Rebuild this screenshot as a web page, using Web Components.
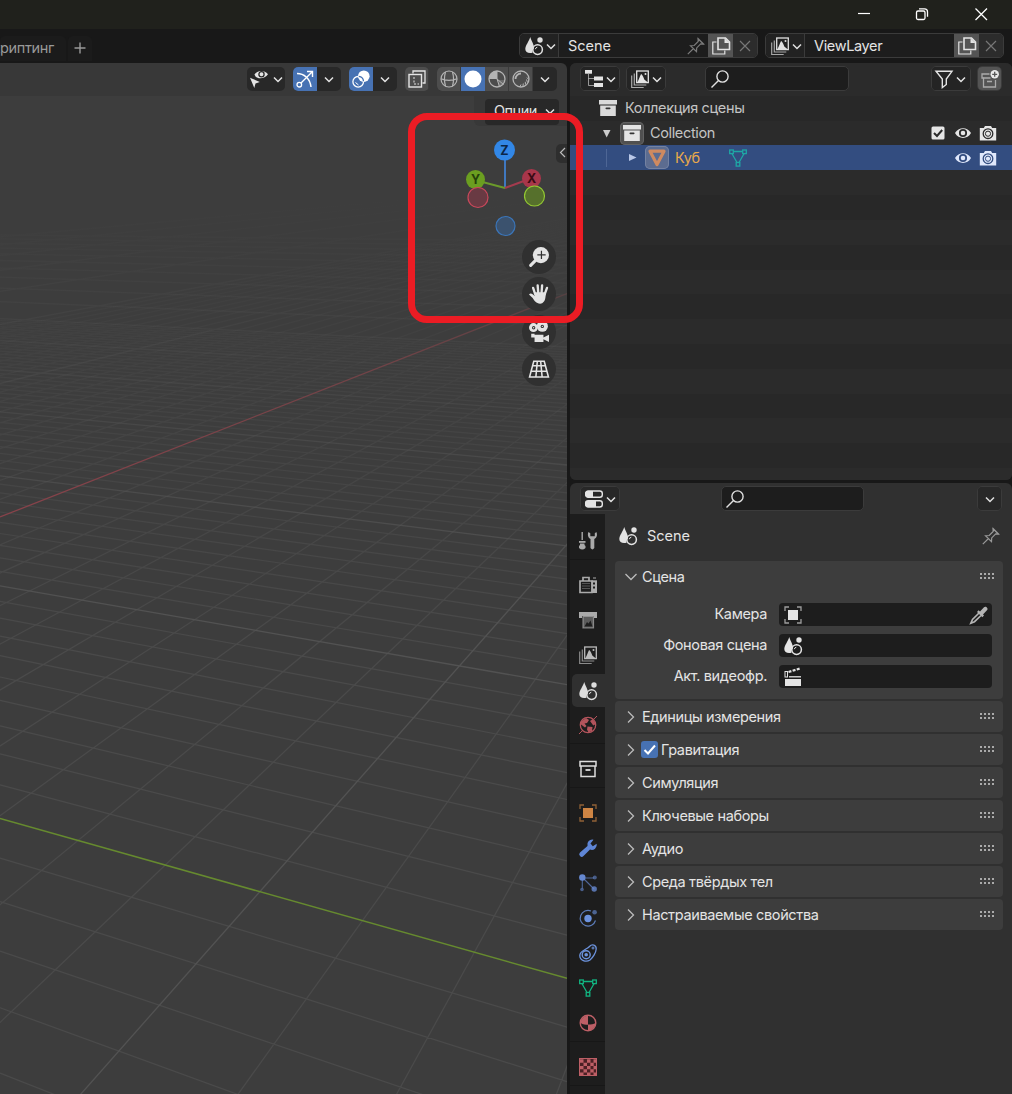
<!DOCTYPE html>
<html lang="ru">
<head>
<meta charset="UTF-8">
<title>Blender</title>
<style>
    body {
        margin: 0;
        width: 1012px;
        height: 1094px;
        overflow: hidden;
        background: #181818;
        color: #e0e0e0;
        font-family: Inter, "Noto Sans", sans-serif;
        font-size: 14.5px;
        line-height: 18px;
        letter-spacing: -.36px;
    }
</style>
</head>
<body>
<blender-app></blender-app>

<script>
// Icon set, every icon is drawn on an 18x18 grid
const ICONS = {
    scene: `<path d="M5.2 0C6.4 4 9.2 7.500 9 11.300 7.800 12.400 7.300 13.800 7.500 15.700 3.500 17 .3 15 .3 12 .3 8.500 4 4.500 5.200 0z" fill="currentColor"/><circle cx="15" cy="3" r="2.700" fill="currentColor"/><circle cx="12.600" cy="12.600" r="4.800" fill="none" stroke="currentColor" stroke-width="1.500"/><path d="M10.300 12.200a2.500 2.500 0 0 1 2-2" fill="none" stroke="currentColor"/>`,
    layers: `<path d="M.7 5.500v12h12M3.300 3.500v11.500h12" fill="none" stroke="currentColor" opacity=".7" stroke-width="1.200"/><rect x="5.700" y="1" width="11.600" height="11.600" fill="none" stroke="currentColor" stroke-width="1.300"/><path d="M6.500 12c1.500-2 2.500-7 3.800-8 1.500 1 2.500 4.500 3 5.500l3 2.500z" fill="currentColor"/><circle cx="14.500" cy="4" r="1" fill="currentColor"/>`,
    pin: `<path d="M.8 17.200l5.700-5.700M10.500 1l6.500 6.500M11 1.800l.2 2.700-4 4-3.700.2 6 6 .2-3.800 4-4 2.700.2z" fill="none" stroke="currentColor" stroke-width="1.200"/>`,
    copy: `<path d="M4.500 5H.8v12h12v-3.500" fill="none" stroke="currentColor" stroke-width="1.200"/><path d="M6 1h7.500l4 4v7.500H6z" fill="none" stroke="currentColor" stroke-width="1.600"/><path d="M12.500 1v5h5z" fill="currentColor"/>`,
    close: `<path d="M4 4l10 10M14 4L4 14" stroke="currentColor" stroke-width="1.200"/>`,
    down: `<path d="M5 7.500l4 4 4-4" fill="none" stroke="currentColor" stroke-width="1.500"/>`,
    tree: `<rect x="0" y="0" width="7" height="3.700" fill="currentColor"/><path d="M3.500 4v11.500H9M3.500 8.500H9" fill="none" stroke="currentColor" opacity=".6"/><rect x="9" y="6.500" width="9" height="4" fill="currentColor"/><rect x="9" y="13" width="9" height="4" fill="currentColor"/>`,
    search: `<circle cx="11.500" cy="6.500" r="5.600" fill="none" stroke="currentColor" stroke-width="1.400"/><path d="M7.500 10.500L.5 17.500" stroke="currentColor" stroke-width="1.500"/>`,
    filter: `<path d="M1 1.300h16L11.300 9v5.500l-4 3V9z" fill="none" stroke="currentColor" stroke-width="1.400"/>`,
    newcol: `<path d="M8.500 4H1v4h1.500v9h12V10" fill="none" stroke="currentColor" stroke-width="1.300"/><path d="M2.500 8h7M6 11.500h5" stroke="currentColor" stroke-width="1.500"/><circle cx="13.700" cy="4.300" r="4.200" fill="#e8e8e8"/><path d="M13.700 1.800v5M11.200 4.300h5" stroke="#545454" stroke-width="1.300"/>`,
    select: `<path d="M4.500 4.500C7 .5 14-.5 18 4.300 15 9 8 9.300 5.500 6.500z" fill="currentColor"/><circle cx="11.500" cy="4.300" r="2.600" fill="currentColor" stroke="#282828" stroke-width="1.300"/><path d="M0 7.800l9.800 4.200-4.300 1.500L4.300 18z" fill="currentColor"/>`,
    gizmo: `<path d="M1 3.500c7 0 13 5 14 13.500" fill="none" stroke="currentColor" stroke-width="1.500"/><circle cx="3.300" cy="14.700" r="2.300" fill="none" stroke="currentColor" stroke-width="1.300"/><path d="M5 13L16 2M11 1.500h5.500V7" fill="none" stroke="currentColor" stroke-width="1.400"/>`,
    overlay: `<circle cx="11.800" cy="6.200" r="5.800" fill="currentColor"/><circle cx="6.200" cy="11.800" r="5.300" fill="none" stroke="currentColor" stroke-width="1.300"/><path d="M6.800 6.400a5.300 5.300 0 0 1 4.700 4.900" fill="none" stroke="#4772b3" stroke-width="1.300"/><path d="M3.500 12.500l3 2.500" stroke="currentColor"/>`,
    xray: `<path d="M5 3.500V1h12v12h-2.500" fill="none" stroke="currentColor" stroke-width="1.300"/><rect x="1" y="4.500" width="12.500" height="12.500" fill="none" stroke="currentColor" stroke-width="1.400"/><path d="M6 7v7h5" fill="none" stroke="currentColor" stroke-dasharray="2 1.500"/>`,
    wire: `<g fill="none" stroke="currentColor" stroke-width="1.200"><circle cx="9" cy="9" r="8"/><path d="M5.500 2c-1.200 4-1.200 10 0 14M12.500 2c1.200 4 1.200 10 0 14M1 8.800c4 2 12 2 16 0"/></g>`,
    solid: `<circle cx="9" cy="9" r="8.500" fill="currentColor"/>`,
    material: `<circle cx="9" cy="9" r="8" fill="none" stroke="currentColor" stroke-width="1.300"/><path d="M9 9V1A8 8 0 0 0 1 9z" fill="currentColor"/><path d="M10 10h7a8 8 0 0 1-7 7z" fill="currentColor" opacity=".3"/><path d="M9 9l6.500 5.500M9 1v8l2.500 7.500" fill="none" stroke="currentColor"/>`,
    rendered: `<circle cx="9" cy="9" r="8" fill="none" stroke="currentColor" stroke-width="1.300"/><path d="M3.500 9A5.500 5.500 0 0 1 9 3.500" fill="none" stroke="currentColor" stroke-width="1.800"/><path d="M8 16.500l1-2M11 16l.3-2.500M13.500 14.500l-.2-2.700M15.500 12.500l-1-3M16.500 9.500l-1.500-2" stroke="currentColor"/>`,
    box: `<rect x="0" y="1" width="18" height="4.500" fill="currentColor"/><path d="M1.200 6.500h15.600V17H1.200z" fill="currentColor"/><rect x="6.500" y="8.500" width="5" height="1.800" rx=".8" fill="#333"/>`,
    boxline: `<path d="M1 1.500h16V6H1zM2 6v10.500h14V6" fill="none" stroke="currentColor" stroke-width="1.500"/><path d="M6.500 10h5" stroke="currentColor" stroke-width="1.800"/>`,
    mesh: `<g fill="none" stroke="currentColor" stroke-width="1.300"><rect x=".7" y="1" width="3.600" height="3.600"/><rect x="13.700" y="1" width="3.600" height="3.600"/><rect x="7.200" y="13.500" width="3.600" height="3.600"/><path d="M4.300 2.500h9.400M3 4.800l5 8.700M15 4.800l-5 8.700"/></g>`,
    cone: `<path d="M2 2.200h14L9 15.500z" fill="none" stroke="currentColor" stroke-width="3.200" stroke-linejoin="round"/>`,
    check: `<rect x="2.500" y="2.500" width="13" height="13" rx="1.500" fill="currentColor"/><path d="M5 9l3 3L13.200 6" fill="none" stroke="#2b2b2b" stroke-width="2"/>`,
    eye: `<path d="M1 9c3.500-6.500 12.500-6.500 16 0-3.500 6.500-12.500 6.500-16 0z" fill="currentColor"/><circle cx="9" cy="9" r="3.200" fill="none" stroke="var(--hole, #2b2b2b)" stroke-width="1.800"/>`,
    camera: `<path d="M.8 4h4l1.200-2h6l1.200 2h4v12.500H.8z" fill="currentColor"/><circle cx="9" cy="9.700" r="4.800" fill="none" stroke="var(--hole, #2b2b2b)" stroke-width="1.300"/><circle cx="9" cy="9.700" r="2.600" fill="none" stroke="var(--hole, #2b2b2b)" stroke-width="1"/>`,
    props: `<rect x=".7" y="1" width="16.600" height="6.200" rx="2.500" fill="none" stroke="currentColor" stroke-width="1.400"/><path d="M3 1h5v6.200H3A3 3 0 0 1 3 1z" fill="currentColor"/><rect x=".7" y="10.800" width="16.600" height="6.200" rx="2.500" fill="none" stroke="currentColor" stroke-width="1.400"/><path d="M3 10.800h8V17H3a3 3 0 0 1 0-6.200z" fill="currentColor"/>`,
    tools: `<path d="M3.200 0v8" stroke="currentColor" stroke-width="1.400"/><rect x="0" y="9" width="6.500" height="1.800" fill="currentColor"/><path d="M1 11.500h4.500v1.500l1 1v2q-3.200 3-6.500 0v-2l1-1z" fill="currentColor"/><path d="M9.500 0c-1.500 3 0 6 2 7V16q1.900 2.800 3.800 0V7c2.200-1 3.600-4 2-7l-1.500 1.200v3h-4.500V1.200z" fill="currentColor"/>`,
    render: `<path d="M4 5V1.500h6V5M1 5h12v11.500H1z" fill="none" stroke="currentColor" stroke-width="1.700"/><path d="M12.500 4.300H18V17h-5.500z" fill="currentColor"/><path d="M3 7.500h8M3 10h8M3 12.500h8" stroke="currentColor" opacity=".4"/><path d="M15 6.500v2M15 10.500v2" stroke="#1d1d1d" stroke-width="2"/><path d="M14 2h3" stroke="currentColor"/>`,
    output: `<path d="M0 1h18v6h-3V5H3v2H0z" fill="currentColor"/><path d="M4 5h10.500V17H4z" fill="currentColor" opacity=".45"/><path d="M4 5.500h10.500V17H4z" fill="none" stroke="currentColor" stroke-width="1.200" opacity=".7"/><path d="M5.500 15.500l2.500-4.500 1.500 1.500L11.500 9.500l2 6z" fill="#1d1d1d"/>`,
    world: `<circle cx="9" cy="9" r="7.700" fill="none" stroke="currentColor" stroke-width="1.300"/><path d="M2 5.500l5-3.500 3 2-2 3-2.500.5 2 2.500-1.500 1.500L2 8.500zM11 5l3-2 2.800 5-2.500 1.500zM8.500 10.500l5 .5-.5 4-3.500 1.500-1.500-3z" fill="currentColor"/><path d="M0 18l3.300-3.300M14.800 3.300L18 0" stroke="currentColor"/>`,
    object: `<path d="M5 1H1v4M13 1h4v4M5 17H1v-4M13 17h4v-4" fill="none" stroke="currentColor" stroke-width="1.300" opacity=".65"/><rect x="4" y="4" width="10" height="10" fill="currentColor"/>`,
    wrench: `<path d="M17.700 4.800A5 5 0 0 1 11 10.500L4.500 17A2.300 2.300 0 0 1 1 13.500L8.500 7A5 5 0 0 1 14.500.7L11.500 4.500l2.300 2.700z" fill="currentColor"/>`,
    particles: `<path d="M3 4h12M3.300 4v10.500M4 4l11 11" stroke="currentColor" stroke-width="1.100" opacity=".7"/><circle cx="3.300" cy="3.500" r="3.200" fill="currentColor"/><circle cx="15.800" cy="3.500" r="2" fill="currentColor" opacity=".6"/><circle cx="3" cy="15.500" r="1.800" fill="currentColor" opacity=".6"/><circle cx="15.200" cy="15" r="2.700" fill="currentColor" opacity=".8"/>`,
    physics: `<path d="M12 2A7.800 7.800 0 1 0 16.500 11.500" fill="none" stroke="currentColor" stroke-width="1.200" opacity=".8"/><circle cx="9" cy="9.500" r="3.700" fill="currentColor"/><circle cx="15.600" cy="3.200" r="2.300" fill="currentColor" opacity=".6"/>`,
    constraint: `<path d="M10.500 2.500C13-.5 17.500 1 17.200 5c-.2 3.500-3.200 8.500-6.200 11C7 18.500.8 16.500.8 11.500.8 6.500 8 5.500 10.500 2.500z" fill="none" stroke="currentColor" stroke-width="1.300"/><circle cx="7.200" cy="10.700" r="4" fill="none" stroke="currentColor" stroke-width="1.400"/><circle cx="7.200" cy="10.700" r="1.800" fill="currentColor"/><path d="M12.500 4h3M14 2.500v3" stroke="currentColor"/>`,
    sphere: `<circle cx="9" cy="9" r="7.800" fill="none" stroke="currentColor" stroke-width="1.400"/><path d="M9 9V1.500A8 8 0 0 0 1.500 9C4 10.500 6.500 10.700 9 10.700zM9 10.500c3 0 5.500-.5 7.700-1.500A8 8 0 0 1 9 16.700z" fill="currentColor"/>`,
    checker: `<rect x=".5" y=".5" width="17" height="17" fill="#4b2024" stroke="currentColor"/><path d="M1 3h3.500M8 3h3.500M14.500 3H18M4.500 6.300H8M11.300 6.300h3.400M1 9.600h3.500M8 9.600h3.500M14.500 9.600H18M4.500 12.900H8M11.300 12.900h3.400M1 16.100h3.500M8 16.100h3.500M14.500 16.100H18" stroke="currentColor" stroke-width="3.300"/>`,
    dropper: `<path d="M10 5.500l4-4.300c1.700-1.700 4.600.9 3.200 2.900L13 8.500l1 1-1.700 1.700L7 6l1.600-1.700z" fill="currentColor"/><path d="M9 7l-6.500 6.500L.8 17.200l3.700-1.500L11 9.500" fill="none" stroke="currentColor" stroke-width="1.600"/>`,
    clapper: `<rect x="1" y="11" width="16" height="7" fill="currentColor"/><rect x="1" y="3.500" width="2.500" height="5.500" fill="none" stroke="currentColor"/><path d="M4.500 4L16 .5" stroke="currentColor" stroke-width="2.200" stroke-dasharray="3 1.300"/><path d="M5 8.800h12" stroke="currentColor" stroke-width="1.300"/>`,
    zoomin: `<circle cx="10.700" cy="7.300" r="7.300" fill="currentColor"/><path d="M7 11L1.500 16.500" stroke="currentColor" stroke-width="2.800" stroke-linecap="round"/><path d="M11.200 3.300v7.500M7.500 7h7.500" stroke="#303030" stroke-width="1.100"/>`,
    hand: `<path d="M5.500 9L3.700 3.500M8.300 8L7.800 1.200M11.300 8l.5-6.800M14 9.500l2.200-6" stroke="currentColor" stroke-width="2.100" stroke-linecap="round"/><path d="M4.600 7.500h10.700l-.5 4.500c-.5 3.500-2 5.700-4.800 5.700-3.500 0-5.200-2.500-6.700-5L0 9.500C1.200 7.800 3.200 8.500 5 11z" fill="currentColor"/>`,
    movie: `<circle cx="4" cy="5" r="4" fill="currentColor"/><circle cx="12" cy="3.800" r="5" fill="currentColor"/><circle cx="4.200" cy="5.200" r="1.500" fill="#303030"/><circle cx="4.200" cy="5.200" r=".6" fill="currentColor"/><circle cx="12" cy="4" r="1.500" fill="#303030"/><circle cx="12" cy="4" r=".6" fill="currentColor"/><path d="M2 10.500h3v1h8v2.500l5-2.500v6.500L13 15.500V18H5v-4H2z" fill="currentColor"/>`,
    persp: `<path d="M4.300 2h9.400L17.500 16.200H.5zM3.300 6h11.500M2 11h14M7.500 2l-1.300 14M10.500 2l1.300 14" fill="none" stroke="currentColor" stroke-width="1.400"/>`,
    chevron: `<path d="M6 3.500l5.500 5.500L6 14.500" fill="none" stroke="currentColor" stroke-width="1.300"/>`
};

class BIcon extends HTMLElement {
    constructor() {
        super();
        this.attachShadow({ mode: 'open' });
    }

    connectedCallback() {
        this.shadowRoot.innerHTML = `
            <style>
                :host { display: inline-flex; flex: none; width: 18px; height: 18px; }
                svg { width: 100%; height: 100%; overflow: visible; }
            </style>
            <svg viewBox="0 0 18 18">${ICONS[this.getAttribute('name')]}</svg>
        `;
    }
}
customElements.define('b-icon', BIcon);

// Rounded widget which joins its segments, like the datablock selectors
class BGroup extends HTMLElement {
    constructor() {
        super();
        this.attachShadow({ mode: 'open' }).innerHTML = `
            <style>
                :host {
                    display: flex;
                    flex: none;
                    box-sizing: border-box;
                    height: 25px;
                    border: 1px solid #3b3b3b;
                    border-radius: 5px;
                    overflow: hidden;
                    background: #1d1d1d;
                }
                :host([flat]) { height: 24px; border: none; background: #282828; }
                ::slotted(*) {
                    display: flex;
                    align-items: center;
                    justify-content: center;
                    box-sizing: border-box;
                }
            </style>
            <slot></slot>
        `;
    }
}
customElements.define('b-group', BGroup);

class TopBar extends HTMLElement {
    constructor() {
        super();
        this.attachShadow({ mode: 'open' }).innerHTML = `
            <style>
                :host { display: block; }
                .title { display: flex; justify-content: flex-end; height: 29px; background: #20211c; }
                .title svg { width: 58px; height: 29px; }
                .bar { display: flex; height: 34px; padding: 4px 8px 0 0; box-sizing: border-box; gap: 7px; }
                .tab {
                    display: flex; align-items: center; justify-content: flex-end;
                    box-sizing: border-box; height: 25px; margin-top: 3px;
                    color: #999; background: #1b1b1b; border-radius: 5px 5px 0 0; overflow: hidden;
                }
                .first { width: 66px; padding: 0 12px 2px 0; }
                .plus { width: 24px; margin-left: -5px; margin-right: auto; justify-content: center; padding-bottom: 2px; }
                .menu { width: 39px; padding-left: 5px; justify-content: flex-start; background: #222; border-right: 1px solid #3b3b3b; }
                .name { width: 149px; justify-content: flex-start; padding: 0 3px 0 9px; color: #e4e4e4; }
                .name b-icon { margin-left: auto; color: #7b7b7b; }
                .copy { width: 25px; background: #545454; color: #e4e4e4; }
                .x { width: 24px; background: #2c2c2c; color: #777; }
                .menu b-icon + b-icon { margin-left: -1px; }
            </style>
            <div class="title">
                <svg viewBox="0 0 58 29"><path d="M20 13.500h12" stroke="#fff" stroke-width="1.200"/></svg>
                <svg viewBox="0 0 58 29"><g fill="none" stroke="#fff" stroke-width="1.300"><rect x="20.500" y="11" width="8.500" height="8.500" rx="1.500"/><path d="M23 8.800h5.500q3 0 3 3v5"/></g></svg>
                <svg viewBox="0 0 58 29"><path d="M21.500 8.500l11.500 11.500M33 8.500L21.500 20" stroke="#fff" stroke-width="1.300"/></svg>
            </div>
            <div class="bar">
                <div class="tab first">криптинг</div>
                <div class="tab plus"><svg width="12" height="12"><path d="M6 .5v11M.5 6h11" stroke="#999" stroke-width="1.400"/></svg></div>
                <b-group>
                    <div class="menu"><b-icon name="scene"></b-icon><b-icon name="down"></b-icon></div>
                    <div class="name" style="letter-spacing:0">Scene<b-icon name="pin"></b-icon></div>
                    <div class="copy"><b-icon name="copy"></b-icon></div>
                    <div class="x"><b-icon name="close"></b-icon></div>
                </b-group>
                <b-group>
                    <div class="menu"><b-icon name="layers"></b-icon><b-icon name="down"></b-icon></div>
                    <div class="name">ViewLayer</div>
                    <div class="copy"><b-icon name="copy"></b-icon></div>
                    <div class="x"><b-icon name="close"></b-icon></div>
                </b-group>
            </div>
        `;
    }
}
customElements.define('top-bar', TopBar);

// Perspective floor grid with the X and Y axes
class FloorGrid extends HTMLElement {
    constructor() {
        super();
        this.attachShadow({ mode: 'open' });
    }

    connectedCallback() {
        const w = 567;
        const top = 96;
        const vanish = { x: 912, y: 154 };
        let minor = '';
        let major = '';

        // lines parallel to Y
        for (let j = -7; j <= 160; j++) {
            if (j === 0 || (j > 60 && j % 10)) continue;
            const d = `M0 ${(170 + 11560 / (j + 17.8) - top).toFixed(1)}L${w} ${(158.6 + 14677 / (j + 17.9) - top).toFixed(1)}`;
            if (j % 10) minor += d; else major += d;
        }
        // lines parallel to X
        for (let i = -70; i <= 17; i++) {
            if (i === 0 || (i < -20 && i % 10)) continue;
            const x = -2106 + 56900 / (34.05 - i);
            const y = 818.2 + 0.2822 * x;
            const k = 4;
            const d = `M${(x - (vanish.x - x) * k).toFixed(1)} ${(y - (vanish.y - y) * k - top).toFixed(1)}L${vanish.x} ${vanish.y - top}`;
            if (i % 10) minor += d; else major += d;
        }

        this.shadowRoot.innerHTML = `
            <style>
                :host { display: block; height: 998px; overflow: hidden; background: #3d3d3d; }
                svg { display: block; }
            </style>
            <svg width="${w}" height="998" fill="none">
                <defs>
                    <linearGradient id="minor" gradientUnits="userSpaceOnUse" x1="0" y1="110" x2="0" y2="560">
                        <stop offset="0" stop-color="#4a4a4a" stop-opacity="0"/>
                        <stop offset=".4" stop-color="#4a4a4a" stop-opacity=".45"/>
                        <stop offset="1" stop-color="#4a4a4a"/>
                    </linearGradient>
                    <linearGradient id="major" gradientUnits="userSpaceOnUse" x1="0" y1="100" x2="0" y2="520">
                        <stop offset="0" stop-color="#525252" stop-opacity="0"/>
                        <stop offset=".5" stop-color="#525252" stop-opacity=".45"/>
                        <stop offset="1" stop-color="#525252"/>
                    </linearGradient>
                    <linearGradient id="axis" x1="0" x2="1" y1="0" y2="0">
                        <stop offset="0" stop-color="#89424a"/>
                        <stop offset=".7" stop-color="#704347"/>
                        <stop offset="1" stop-color="#564042"/>
                    </linearGradient>
                </defs>
                <path d="${minor}" stroke="url(#minor)" stroke-width="1.200"/>
                <path d="${major}" stroke="url(#major)" stroke-width="1.300"/>
                <path d="M0 421L567 197.500" stroke="url(#axis)" stroke-width="1.300"/>
                <path d="M0 722.500L567 882.300" stroke="#668a2f" stroke-width="1.500"/>
            </svg>
        `;
    }
}
customElements.define('floor-grid', FloorGrid);

class ViewPort extends HTMLElement {
    constructor() {
        super();
        this.attachShadow({ mode: 'open' }).innerHTML = `
            <style>
                :host { display: block; position: relative; width: 567px; background: #383838; border-radius: 0 6px 0 0; overflow: hidden; }
                header { display: flex; box-sizing: border-box; height: 33px; padding: 4px 10px 0 0; justify-content: flex-end; gap: 8px; }
                b-group > div { width: 24px; color: #b4b4b4; }
                b-group > div:last-child { color: #e4e4e4; }
                b-group > .wide { width: 38px; padding-left: 3px; justify-content: flex-start; }
                .wide b-icon + b-icon { margin-left: 1px; }
                b-group > .on { background: #4772b3; color: #fff; }
                b-group > .off { background: #4d4d4d; color: #b4b4b4; border-right: 1px solid #3b3b3b; }
                .options {
                    position: absolute; left: 474px; top: 33px; width: 93px; height: 30px;
                    box-sizing: border-box; padding: 3px 8px 0 11px; background: #383838; border-radius: 0 0 0 6px;
                }
                .options div {
                    display: flex; align-items: center; justify-content: space-between;
                    height: 24px; padding: 0 0 2px 9px; background: #282828; border-radius: 4px; color: #e4e4e4; letter-spacing: -.5px;
                }
                .gizmo { position: absolute; left: 460px; top: 67px; }
                .gizmo text { font: 700 12.500px Inter, sans-serif; text-anchor: middle; letter-spacing: 0; }
                nav { position: absolute; left: 522px; top: 177px; display: grid; gap: 3.400px; }
                nav div {
                    display: flex; align-items: center; justify-content: center;
                    width: 34px; height: 34px; border-radius: 50%; background: #303030; color: #e4e4e4;
                }
                nav b-icon { width: 20px; height: 20px; }
                .side {
                    position: absolute; left: 556px; top: 81px; width: 11px; height: 19px;
                    background: #2e2e2e; border-radius: 5px 0 0 5px;
                }
            </style>
            <header>
                <b-group flat><div class="wide"><b-icon name="select"></b-icon><b-icon name="down"></b-icon></div></b-group>
                <b-group flat><div class="on"><b-icon name="gizmo"></b-icon></div><div><b-icon name="down"></b-icon></div></b-group>
                <b-group flat><div class="on"><b-icon name="overlay"></b-icon></div><div><b-icon name="down"></b-icon></div></b-group>
                <b-group flat><div class="off"><b-icon name="xray"></b-icon></div></b-group>
                <b-group flat>
                    <div class="off"><b-icon name="wire"></b-icon></div>
                    <div class="on"><b-icon name="solid"></b-icon></div>
                    <div class="off"><b-icon name="material"></b-icon></div>
                    <div class="off"><b-icon name="rendered"></b-icon></div>
                    <div><b-icon name="down"></b-icon></div>
                </b-group>
            </header>
            <floor-grid></floor-grid>
            <div class="options"><div>Опции<b-icon name="down"></b-icon></div></div>
            <svg class="gizmo" width="92" height="112">
                <g stroke-width="2">
                    <path d="M45 58V20" stroke="#4078bf"/>
                    <path d="M45 58L15 50" stroke="#6b9a2b"/>
                    <path d="M45 58l27-10" stroke="#a33b4e"/>
                </g>
                <circle cx="44.500" cy="20" r="10.500" fill="#3287e6"/>
                <circle cx="71.500" cy="48.500" r="9.500" fill="#a8364b"/>
                <circle cx="15.500" cy="49.500" r="9.500" fill="#6b9e20"/>
                <g stroke-width="1.200">
                    <circle cx="18" cy="67.500" r="10" fill="#693a43" stroke="#c9485b"/>
                    <circle cx="74.500" cy="66" r="10" fill="#56702c" stroke="#93c832"/>
                    <circle cx="45.500" cy="96" r="9.500" fill="#3b526e" stroke="#3b75b8"/>
                </g>
                <text x="44.500" y="24.700" fill="#0b2547">Z</text>
                <text x="71.500" y="53" fill="#3a0a14">X</text>
                <text x="15.500" y="54" fill="#24400a">Y</text>
            </svg>
            <nav>
                <div><b-icon name="zoomin"></b-icon></div>
                <div><b-icon name="hand"></b-icon></div>
                <div><b-icon name="movie"></b-icon></div>
                <div><b-icon name="persp"></b-icon></div>
            </nav>
            <div class="side"><svg width="11" height="19"><path d="M9 4L4.500 8.500 9 13" fill="none" stroke="#bbb" stroke-width="1.200"/></svg></div>
        `;
    }
}
customElements.define('view-port', ViewPort);

class OutLiner extends HTMLElement {
    constructor() {
        super();
        this.attachShadow({ mode: 'open' }).innerHTML = `
            <style>
                :host { display: block; height: 417px; background: #282828; border-radius: 6px; overflow: hidden; }
                header { display: flex; box-sizing: border-box; height: 33px; padding: 3px 10px 0; gap: 6px; background: #2b2b2b; }
                .menu { width: 38px; padding-left: 4px; justify-content: flex-start; background: #242424; color: #e4e4e4; }
                .menu b-icon + b-icon { margin-left: -1px; }
                .search { width: 142px; justify-content: flex-start; padding-left: 5px; }
                .find { margin: 0 auto 0 33px; }
                .new { width: 23px; background: #545454; color: #aaa; }
                .rows { height: 384px; background: repeating-linear-gradient(#282828 0 24.800px, #2b2b2b 24.800px 49.600px); }
                .row { display: flex; align-items: center; box-sizing: border-box; height: 24.700px; padding-right: 15px; color: #c4c4c4; }
                .row.sel { background: #334d80; color: #e9a94b; --hole: #334d80; }
                .badge {
                    display: flex; align-items: center; justify-content: center;
                    width: 24px; height: 23px; margin-right: 6px; border-radius: 5px;
                    background: #505050; box-shadow: inset 0 0 0 1px #626262;
                }
                .sel .badge { background: #5c6c90; box-shadow: inset 0 0 0 1px #7482a2; color: #cf8a60; }
                .tri { width: 9px; height: 9px; }
                .right { display: flex; gap: 7px; margin-left: auto; color: #e6e6e6; }
                .sel .right { color: #e0e8fb; }
                .line { width: 1px; height: 18px; background: #4e6695; margin: 0 21px 0 36px; }
            </style>
            <header>
                <b-group><div class="menu"><b-icon name="tree"></b-icon><b-icon name="down"></b-icon></div></b-group>
                <b-group><div class="menu"><b-icon name="layers"></b-icon><b-icon name="down"></b-icon></div></b-group>
                <b-group class="find"><div class="search"><b-icon name="search"></b-icon></div></b-group>
                <b-group><div class="menu" style="padding-left:3px"><b-icon name="filter"></b-icon><b-icon name="down"></b-icon></div></b-group>
                <b-group><div class="new"><b-icon name="newcol"></b-icon></div></b-group>
            </header>
            <div class="rows">
                <div class="row" style="padding-left:29px"><b-icon name="box" style="color:#dadada; margin-right:8px"></b-icon>Коллекция сцены</div>
                <div class="row" style="padding-left:32px">
                    <svg class="tri" style="margin-right:9px"><path d="M1 1h7.500L4.700 8.500z" fill="#ccc"/></svg>
                    <span class="badge"><b-icon name="box" style="color:#e4e4e4"></b-icon></span>Collection
                    <span class="right"><b-icon name="check"></b-icon><b-icon name="eye"></b-icon><b-icon name="camera"></b-icon></span>
                </div>
                <div class="row sel">
                    <span class="line"></span>
                    <svg class="tri" style="margin-right:8px"><path d="M1 1v7l7.500-3.500z" fill="#b9c8e8"/></svg>
                    <span class="badge"><b-icon name="cone"></b-icon></span>Куб
                    <b-icon name="mesh" style="color:#1fa7a5; margin-left:29px"></b-icon>
                    <span class="right"><b-icon name="eye"></b-icon><b-icon name="camera"></b-icon></span>
                </div>
            </div>
        `;
    }
}
customElements.define('out-liner', OutLiner);

// Collapsible panel: title attribute is "label", open panels show the slot
class PropPanel extends HTMLElement {
    constructor() {
        super();
        this.attachShadow({ mode: 'open' });
    }

    connectedCallback() {
        const open = this.hasAttribute('open');
        const check = this.hasAttribute('checked')
            ? '<svg class="check" width="17" height="17"><path d="M3.500 9l3.500 3.500 7-8" fill="none" stroke="#fff" stroke-width="2"/></svg>'
            : '';
        let dots = '';
        for (let y = 0; y < 2; y++) {
            for (let x = 0; x < 4; x++) {
                dots += `<rect x="${x * 4}" y="${y * 4}" width="2" height="2" fill="#aaa"/>`;
            }
        }
        this.shadowRoot.innerHTML = `
            <style>
                :host { display: block; border-radius: 4px; background: #3d3d3d; color: #e4e4e4; }
                .head { display: flex; align-items: center; height: 31px; padding: 0 8px 0 7px; }
                .arrow { margin-right: 2px; color: #bbb; }
                .open { transform: rotate(90deg); }
                .check { background: #4772b3; border-radius: 3px; margin: 0 3px 0 -1px; }
                .dots { margin-left: auto; }
            </style>
            <div class="head">
                <b-icon name="chevron" class="arrow ${open ? 'open' : ''}"></b-icon>${check}
                <span>${this.getAttribute('label')}</span>
                <svg class="dots" width="15" height="7">${dots}</svg>
            </div>
            <slot></slot>
        `;
    }
}
customElements.define('prop-panel', PropPanel);

class PropField extends HTMLElement {
    constructor() {
        super();
        this.attachShadow({ mode: 'open' });
    }

    connectedCallback() {
        this.shadowRoot.innerHTML = `
            <style>
                :host { display: flex; align-items: center; height: 23px; margin: 0 11px 8px 0; }
                label { width: 152px; margin-right: 12px; padding-bottom: 1px; text-align: right; }
                div {
                    display: flex; flex: 1; align-items: center; justify-content: space-between;
                    height: 23px; padding: 0 4px 0 5px; border-radius: 4px; background: #1d1d1d;
                }
            </style>
            <label>${this.getAttribute('label')}</label>
            <div><b-icon name="${this.getAttribute('icon')}"></b-icon><slot></slot></div>
        `;
    }
}
customElements.define('prop-field', PropField);

class PropEditor extends HTMLElement {
    constructor() {
        super();
        this.attachShadow({ mode: 'open' });
    }

    connectedCallback() {
        const groups = [
            [['tools', '#aaa']],
            [['render', '#aaa'], ['output', '#aaa'], ['layers', '#bbb'], ['scene', '#ddd'], ['world', '#b3545c']],
            [['boxline', '#ddd']],
            [['object', '#ce8544'], ['wrench', '#5f86d6'], ['particles', '#6688d0'], ['physics', '#6c93e0'],
             ['constraint', '#6c93dd'], ['mesh', '#12b481'], ['sphere', '#bd5f66']],
            [['checker', '#bd5f66']]
        ];
        const tabs = groups.map(group => `<div class="group">${group.map(([name, color]) =>
            `<div class="tab ${name}"><b-icon name="${name}" style="color:${color}"></b-icon></div>`).join('')}</div>`).join('');

        this.shadowRoot.innerHTML = `
            <style>
                :host { display: flex; flex-direction: column; flex: 1; background: #303030; border-radius: 6px 6px 0 0; overflow: hidden; }
                header { display: flex; justify-content: space-between; box-sizing: border-box; height: 31px; padding: 3px 10px 0; }
                .menu { width: 38px; padding-left: 4px; justify-content: flex-start; background: #282828; color: #e4e4e4; }
                .menu b-icon + b-icon { margin-left: -1px; }
                .search { width: 141px; padding-left: 4px; justify-content: flex-start; }
                .more { width: 23px; background: #282828; }
                .body { display: flex; flex: 1; }
                .tabs { display: flex; flex-direction: column; gap: 9px; box-sizing: border-box; width: 35px; padding-top: 10px; background: #1d1d1d; }
                .group { box-shadow: 0 1px #171717; }
                .tab { display: flex; align-items: center; justify-content: center; height: 34px; padding: 0 0 1px 1px; }
                .tab.scene { height: 33px; margin: 1px 0 1px 2px; padding: 0 2px 0 0; box-sizing: border-box; background: #303030; border-radius: 5px 0 0 5px; }
                .content { flex: 1; padding: 0 9px 0 10px; }
                .path { display: flex; align-items: center; height: 44px; padding: 0 3px 0 4px; margin-bottom: 3px; gap: 10px; color: #e4e4e4; letter-spacing: 0; }
                .path .pin { margin-left: auto; color: #999; }
                prop-panel { margin-bottom: 2px; }
                prop-panel[open] { height: 138px; }
                prop-field:first-of-type { margin-top: 11px; }
            </style>
            <header>
                <b-group><div class="menu"><b-icon name="props"></b-icon><b-icon name="down"></b-icon></div></b-group>
                <b-group style="margin-right:13px"><div class="search"><b-icon name="search"></b-icon></div></b-group>
                <b-group><div class="more"><b-icon name="down"></b-icon></div></b-group>
            </header>
            <div class="body">
                <div class="tabs">${tabs}</div>
                <div class="content">
                    <div class="path"><b-icon name="scene"></b-icon>Scene<b-icon name="pin" class="pin"></b-icon></div>
                    <prop-panel label="Сцена" open>
                        <prop-field label="Камера" icon="object"><b-icon name="dropper" style="color:#b4b4b4"></b-icon></prop-field>
                        <prop-field label="Фоновая сцена" icon="scene"></prop-field>
                        <prop-field label="Акт. видеофр." icon="clapper"></prop-field>
                    </prop-panel>
                    <prop-panel label="Единицы измерения"></prop-panel>
                    <prop-panel label="Гравитация" checked></prop-panel>
                    <prop-panel label="Симуляция"></prop-panel>
                    <prop-panel label="Ключевые наборы"></prop-panel>
                    <prop-panel label="Аудио"></prop-panel>
                    <prop-panel label="Среда твёрдых тел"></prop-panel>
                    <prop-panel label="Настраиваемые свойства"></prop-panel>
                </div>
            </div>
        `;
    }
}
customElements.define('prop-editor', PropEditor);

class BlenderApp extends HTMLElement {
    constructor() {
        super();
        this.attachShadow({ mode: 'open' }).innerHTML = `
            <style>
                :host { display: flex; flex-direction: column; position: relative; height: 1094px; background: #181818; }
                main { display: flex; flex: 1; gap: 3px; }
                aside { display: flex; flex-direction: column; flex: 1; gap: 3px; }
                .mark {
                    position: absolute; left: 408px; top: 113px; width: 175px; height: 210px;
                    box-sizing: border-box; border: 7.500px solid #ec1c24; border-radius: 19px;
                }
            </style>
            <top-bar></top-bar>
            <main>
                <view-port></view-port>
                <aside>
                    <out-liner></out-liner>
                    <prop-editor></prop-editor>
                </aside>
            </main>
            <div class="mark"></div>
        `;
    }
}
customElements.define('blender-app', BlenderApp);
</script>
</body>
</html>
